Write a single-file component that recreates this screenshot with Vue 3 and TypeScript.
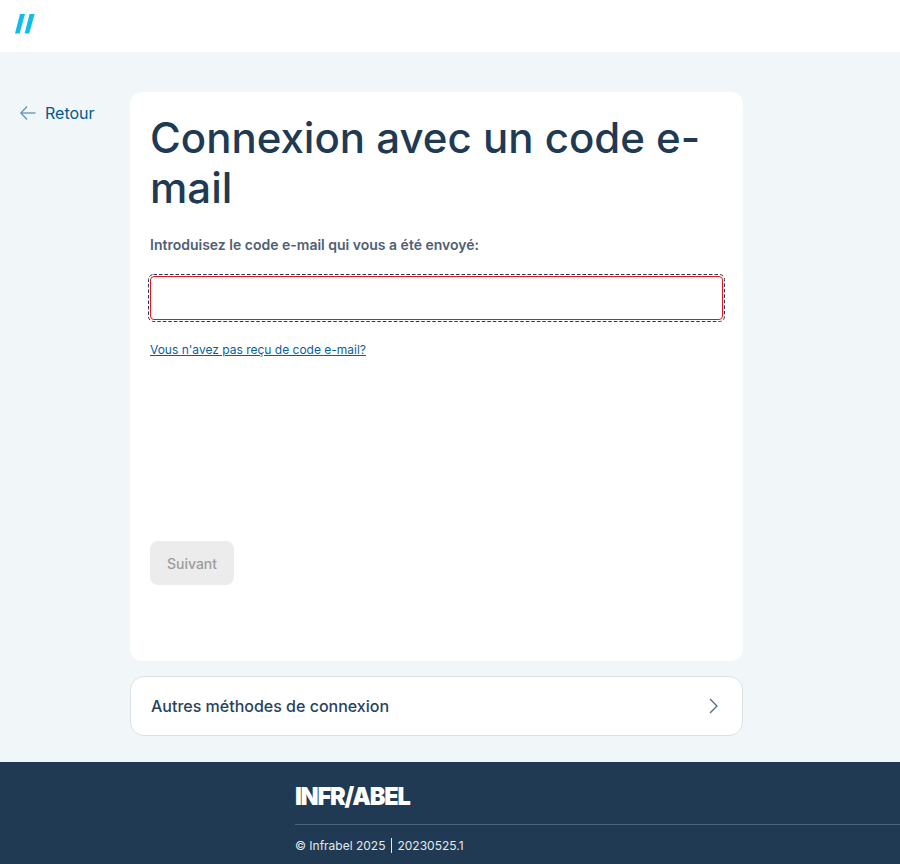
<script setup lang="ts">
import { ref } from 'vue';

const code = ref('');
</script>

<template>
  <div class="page">
    <header class="topbar">
      <svg class="logo" width="20" height="20" viewBox="0 0 20 20">
        <path d="M5 0H10L4.6 19.4H0Z M14.6 0H19.6L14.2 19.4H9.6Z" fill="#0dbdec" />
      </svg>
    </header>

    <main class="main">
      <a class="back" href="#">
        <svg width="16" height="16" viewBox="0 0 16 16" fill="none" stroke="#5b93b8" stroke-width="1.3">
          <path d="M0.8 8H15.5" />
          <path d="M7 1.5L0.8 8L7 14.5" />
        </svg>
        <span>Retour</span>
      </a>

      <div class="column">
        <section class="card">
          <h1>Connexion avec un code e-mail</h1>
          <label class="label" for="code">Introduisez le code e-mail qui vous a été envoyé:</label>
          <div class="field">
            <input id="code" v-model="code" class="input" type="text" />
            <svg class="focus-ring" width="577" height="48" viewBox="0 0 577 48" fill="none">
              <rect x="0.5" y="0.5" width="576" height="47" rx="5" stroke="#203a54" stroke-dasharray="3.5 2" />
            </svg>
          </div>
          <a class="help" href="#">Vous n'avez pas reçu de code e-mail?</a>
          <button class="next" type="button" disabled>Suivant</button>
        </section>

        <button class="other" type="button">
          <span>Autres méthodes de connexion</span>
          <svg width="9" height="16" viewBox="0 0 9 16" fill="none" stroke="#4f6883" stroke-width="1.3">
            <path d="M1 1L8 8L1 15" />
          </svg>
        </button>
      </div>
    </main>

    <footer class="footer">
      <div class="brand">INFR/ABEL</div>
      <div class="legal">
        <span>© Infrabel 2025</span>
        <span class="version">20230525.1</span>
      </div>
    </footer>
  </div>
</template>

<style>
html,
body {
  margin: 0;
}
</style>

<style scoped>
.page {
  display: flex;
  flex-direction: column;
  min-height: 864px;
  background: #f1f6f9;
  font-family: Inter, "Liberation Sans", sans-serif;
  color: #203a54;
}

.topbar {
  display: flex;
  align-items: center;
  height: 52px;
  padding-left: 15px;
  box-sizing: border-box;
  background: #fff;
}

.logo {
  display: block;
  margin-top: -4px;
}

.main {
  display: flex;
  flex: 1;
  padding-top: 40px;
}

.back {
  display: flex;
  align-items: center;
  gap: 9px;
  width: 130px;
  height: 16px;
  margin-top: 13px;
  padding-left: 20px;
  box-sizing: border-box;
  color: #005a8f;
  font-size: 16px;
  text-decoration: none;
  flex-shrink: 0;
}

.column {
  width: 613px;
}

.card {
  display: flex;
  flex-direction: column;
  height: 569px;
  padding: 21px 20px 20px;
  box-sizing: border-box;
  background: #fff;
  border-radius: 12px;
}

h1 {
  margin: 0;
  font-size: 42px;
  font-weight: 500;
  line-height: 50.4px;
  color: #203a54;
}

.label {
  margin-top: 21.2px;
  font-size: 14px;
  font-weight: 600;
  line-height: 20px;
  color: #4f6075;
}

.field {
  position: relative;
  margin-top: 21px;
}

.focus-ring {
  position: absolute;
  top: -2px;
  left: -2px;
  pointer-events: none;
}

.input {
  display: block;
  width: 100%;
  height: 44px;
  box-sizing: border-box;
  border: 1px solid #e8101a;
  border-radius: 4px;
  background: #fff;
  outline: none;
}

.help {
  margin-top: 22px;
  font-size: 12px;
  line-height: 16px;
  color: #0a5f9a;
}

.next {
  width: 84px;
  height: 44px;
  margin-top: 183px;
  border: none;
  border-radius: 8px;
  background: #ececec;
  color: #9c9c9c;
  font-family: inherit;
  font-size: 14px;
  font-weight: 500;
}

.other {
  display: flex;
  align-items: center;
  justify-content: space-between;
  width: 100%;
  height: 60px;
  margin-top: 15px;
  padding: 0 24px 0 20px;
  box-sizing: border-box;
  border: 1px solid #dde1e5;
  border-radius: 14px;
  background: #fff;
  color: #29425c;
  font-family: inherit;
  font-size: 16px;
  font-weight: 500;
}

.footer {
  height: 102px;
  padding: 23px 0 0 295px;
  box-sizing: border-box;
  background: #203a54;
  color: #e4e9ee;
}

.brand {
  height: 19px;
  color: #fff;
  font-size: 25px;
  font-weight: 900;
  line-height: 22px;
  letter-spacing: -1.3px;
  transform: scaleX(0.94);
  transform-origin: left;
}

.legal {
  display: flex;
  align-items: center;
  height: 40px;
  margin-top: 20px;
  border-top: 1px solid #4f6479;
  font-size: 12px;
}

.version {
  margin-left: 6px;
  padding-left: 5px;
  border-left: 1px solid #e4e9ee;
  line-height: 15px;
}
</style>
